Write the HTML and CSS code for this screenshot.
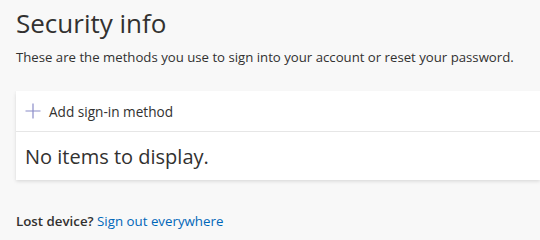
FILE: index.html
```html
<!DOCTYPE html>
<html lang="en">
<head>
<meta charset="utf-8">
<title>Security info</title>
<link rel="stylesheet" href="styles.css">
</head>
<body>
<main class="page">
  <h1 class="title">Security info</h1>
  <p class="subtitle">These are the methods you use to sign into your account or reset your password.</p>
  <section class="card">
    <div class="card-row add-row">
      <svg class="plus" width="16" height="16" viewBox="0 0 16 16" aria-hidden="true">
        <path d="M8 0.5V15.5M0.5 8H15.5" stroke="#8a8cc8" stroke-width="1.2" fill="none"/>
      </svg>
      <span class="add-label">Add sign-in method</span>
    </div>
    <div class="card-row empty-row">No items to display.</div>
  </section>
  <p class="lost"><span class="lost-label">Lost device?</span> <a class="link" href="#">Sign out everywhere</a></p>
</main>
</body>
</html>
```
FILE: styles.css
```css
html, body {
  margin: 0;
  padding: 0;
  background: #f8f8f8;
  overflow: hidden;
}
body {
  font-family: "Open Sans", "Noto Sans", sans-serif;
  color: #323130;
}
.page {
  padding: 0 0 0 16px;
}
.title {
  margin: 0;
  padding-top: 5px;
  font-size: 26px;
  font-weight: 400;
  line-height: 36px;
  color: #323130;
}
.subtitle {
  margin: 7px 0 0;
  font-size: 13.2px;
  line-height: 18px;
}
.card {
  margin-top: 25px;
  background: #fff;
  box-shadow: 0 1.6px 3.6px rgba(0,0,0,0.13), 0 0.3px 0.9px rgba(0,0,0,0.11);
}
.card-row {
  display: flex;
  align-items: center;
  padding-left: 9px;
}
.add-row {
  height: 40px;
  gap: 8px;
  font-size: 13.6px;
  border-bottom: 1px solid #e6e6e6;
}
.plus {
  display: block;
}
.empty-row {
  height: 48px;
  font-size: 20px;
}
.lost {
  margin: 32px 0 0;
  font-size: 13.3px;
  line-height: 18px;
}
.lost-label {
  font-weight: 600;
}
.link {
  color: #0067b8;
  text-decoration: none;
}
```
